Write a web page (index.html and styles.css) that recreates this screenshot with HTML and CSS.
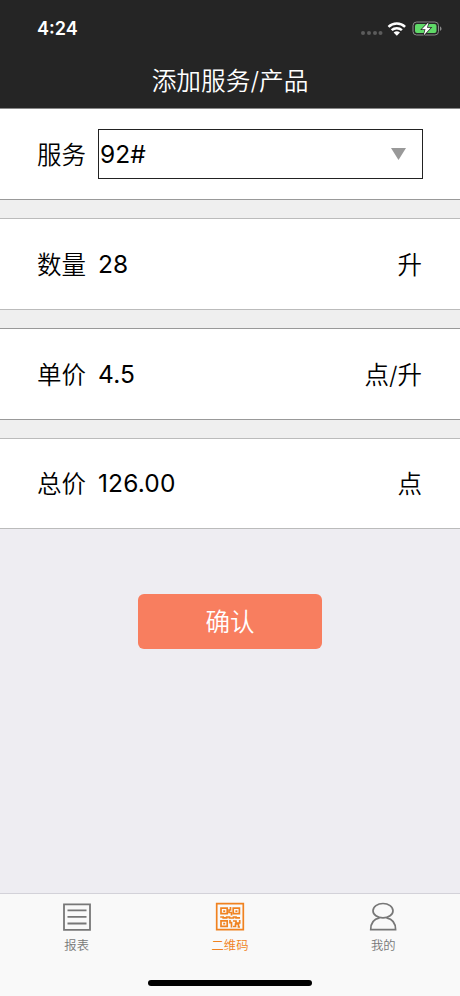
FILE: index.html
```html
<!DOCTYPE html>
<html lang="zh-CN">
<head>
  <meta charset="UTF-8">
  <title>添加服务/产品</title>
  <link rel="stylesheet" href="styles.css">
</head>
<body>
  <header class="header">
    <div class="status">
      <span class="time">4:24</span>
      <svg class="status-icons" width="84" height="20" viewBox="0 0 84 20">
        <g fill="#5c5c5c">
          <circle cx="3" cy="13" r="2"/>
          <circle cx="9" cy="13" r="2"/>
          <circle cx="15" cy="13" r="2"/>
          <circle cx="20.5" cy="13" r="2"/>
        </g>
        <g fill="none" stroke="#fff" stroke-width="2.5">
          <path d="M28.5 6.9a12 12 0 0 1 16.6 0"/>
          <path d="M31.7 10.2a7.4 7.4 0 0 1 10.2 0"/>
        </g>
        <path d="M33.6 12.6a4.8 4.8 0 0 1 6.4 0l-3.2 3.2z" fill="#fff"/>
        <rect x="53" y="2" width="25.5" height="13" rx="3.6" fill="none" stroke="#8a8a8a"/>
        <rect x="55" y="4" width="21.5" height="9" rx="2" fill="#5fd968"/>
        <path d="M80 6.4c2 .7 2 3.7 0 4.4z" fill="#8a8a8a"/>
        <path d="M68.6 2.2 61.8 9.3h3.7l-1.9 6.1 7.1-7.6H67z" fill="#fff" stroke="#252525" stroke-width="1.4" paint-order="stroke"/>
      </svg>
    </div>
    <h1 class="title">添加服务/产品</h1>
  </header>

  <main class="form">
    <div class="row">
      <span class="label">服务</span>
      <div class="select">
        <span>92#</span>
        <svg class="arrow" width="15" height="12" viewBox="0 0 15 12"><path d="M0 0h15L7.5 12z" fill="#999"/></svg>
      </div>
    </div>
    <div class="row">
      <span class="label">数量</span>
      <span class="value">28</span>
      <span class="unit">升</span>
    </div>
    <div class="row dark">
      <span class="label">单价</span>
      <span class="value">4.5</span>
      <span class="unit">点/升</span>
    </div>
    <div class="row">
      <span class="label">总价</span>
      <span class="value">126.00</span>
      <span class="unit">点</span>
    </div>
  </main>

  <div class="actions">
    <button class="confirm">确认</button>
  </div>

  <nav class="tabs">
    <div class="tab">
      <svg width="30" height="30" viewBox="0 0 30 30" fill="none" stroke="#777" stroke-width="1.8">
        <path d="M2 2.3h26v25.5H2zM5.500 8.300h19M5.500 14.900h19M5.500 21.500h19"/>
      </svg>
      <span>报表</span>
    </div>
    <div class="tab active">
      <svg width="30" height="30" viewBox="0 0 30 30" fill="none" stroke="#f08220" stroke-width="1.7">
        <path d="M1.7 1.7h26.6v26H1.7z"/>
        <path d="M6 6.2h6.2v5.5H6zM18.2 6.2h6.2v5.5h-6.2zM6 18.8h6.2v5.5H6z"/>
        <path d="M8.2 9.2h2M20.4 9.2h2M8.2 21.7h2M15.5 5v3H14v2.5h2.5v3M5.2 15h3v.8h3.5V15h2.8v1h4v-1H21v.8h4M15 18v2.7h1.5v4.7M18 19h3v2h3.7v-3M18 24.5h2.5V22h3v3H25"/>
      </svg>
      <span>二维码</span>
    </div>
    <div class="tab">
      <svg width="30" height="30" viewBox="0 0 30 30" fill="none" stroke="#777" stroke-width="1.7">
        <ellipse cx="15" cy="8.7" rx="10" ry="7.2"/>
        <path d="M11.5 15.9C6 17 2.7 21.300 2.700 27.700h24.900c0-6.400-3.500-10.700-9.100-11.800"/>
      </svg>
      <span>我的</span>
    </div>
    <div class="home-bar"></div>
  </nav>
</body>
</html>
```
FILE: styles.css
```css
* {
  box-sizing: border-box;
}
body {
  margin: 0;
  height: 996px;
  display: flex;
  flex-direction: column;
  background: #eeedf2;
  color: #000;
  font-family: Inter, "Noto Sans CJK SC", sans-serif;
  font-size: 24.5px;
  overflow: hidden;
}
.header {
  height: 109px;
  background: #252525;
  color: #fff;
  border-bottom: 1px solid #888;
}
.status {
  display: flex;
  justify-content: space-between;
  height: 56px;
  padding: 18px 16px 0 37px;
}
.time {
  font-size: 18px;
  font-weight: 600;
  line-height: 22px;
}
.status-icons {
  margin-top: 2px;
}
.title {
  margin: 0;
  font-size: 24.7px;
  font-weight: 350;
  line-height: 51px;
  text-align: center;
}
.form {
  display: flex;
  flex-direction: column;
  gap: 18px;
  background: #efefef;
}
.row {
  display: flex;
  align-items: center;
  height: 92px;
  padding: 0 38px 0 37px;
  background: #fff;
  border-top: 1px solid #bbb;
  border-bottom: 1px solid #bbb;
}
.row:first-child {
  height: 91px;
  border-top: 0;
  border-bottom-color: #999;
}
.row:last-child {
  height: 91px;
}
.row.dark {
  border-color: #999;
}
.label {
  width: 61px;
  padding-bottom: 2px;
  font-weight: 350;
}
.value {
  padding-bottom: 1px;
  letter-spacing: 0.15px;
}
.unit {
  margin-left: auto;
  padding-bottom: 2px;
  font-weight: 350;
}
.select {
  flex: 1;
  display: flex;
  align-items: center;
  justify-content: space-between;
  height: 50px;
  margin-right: -1px;
  padding: 0 16px 0 1px;
  border: 1px solid #222;
}
.arrow {
  margin-top: -1px;
}
.actions {
  flex: 1;
  padding-top: 65px;
  text-align: center;
}
.confirm {
  width: 184px;
  height: 55px;
  padding: 0 0 3px;
  border: 0;
  border-radius: 6px;
  background: #f87e5f;
  color: #fff;
  font: inherit;
  font-weight: 350;
}
.tabs {
  position: relative;
  display: flex;
  height: 103px;
  padding-top: 8px;
  background: #f9f9f9;
  border-top: 1px solid #d3d2d9;
}
.tab {
  flex: 1;
  display: flex;
  flex-direction: column;
  align-items: center;
  color: #777;
  font-size: 12.3px;
  font-weight: 350;
  line-height: 18px;
}
.tab span {
  margin-top: 5px;
}
.tab.active {
  color: #f08220;
}
.home-bar {
  position: absolute;
  left: 148px;
  bottom: 10px;
  width: 164px;
  height: 6px;
  border-radius: 3px;
  background: #000;
}
```
